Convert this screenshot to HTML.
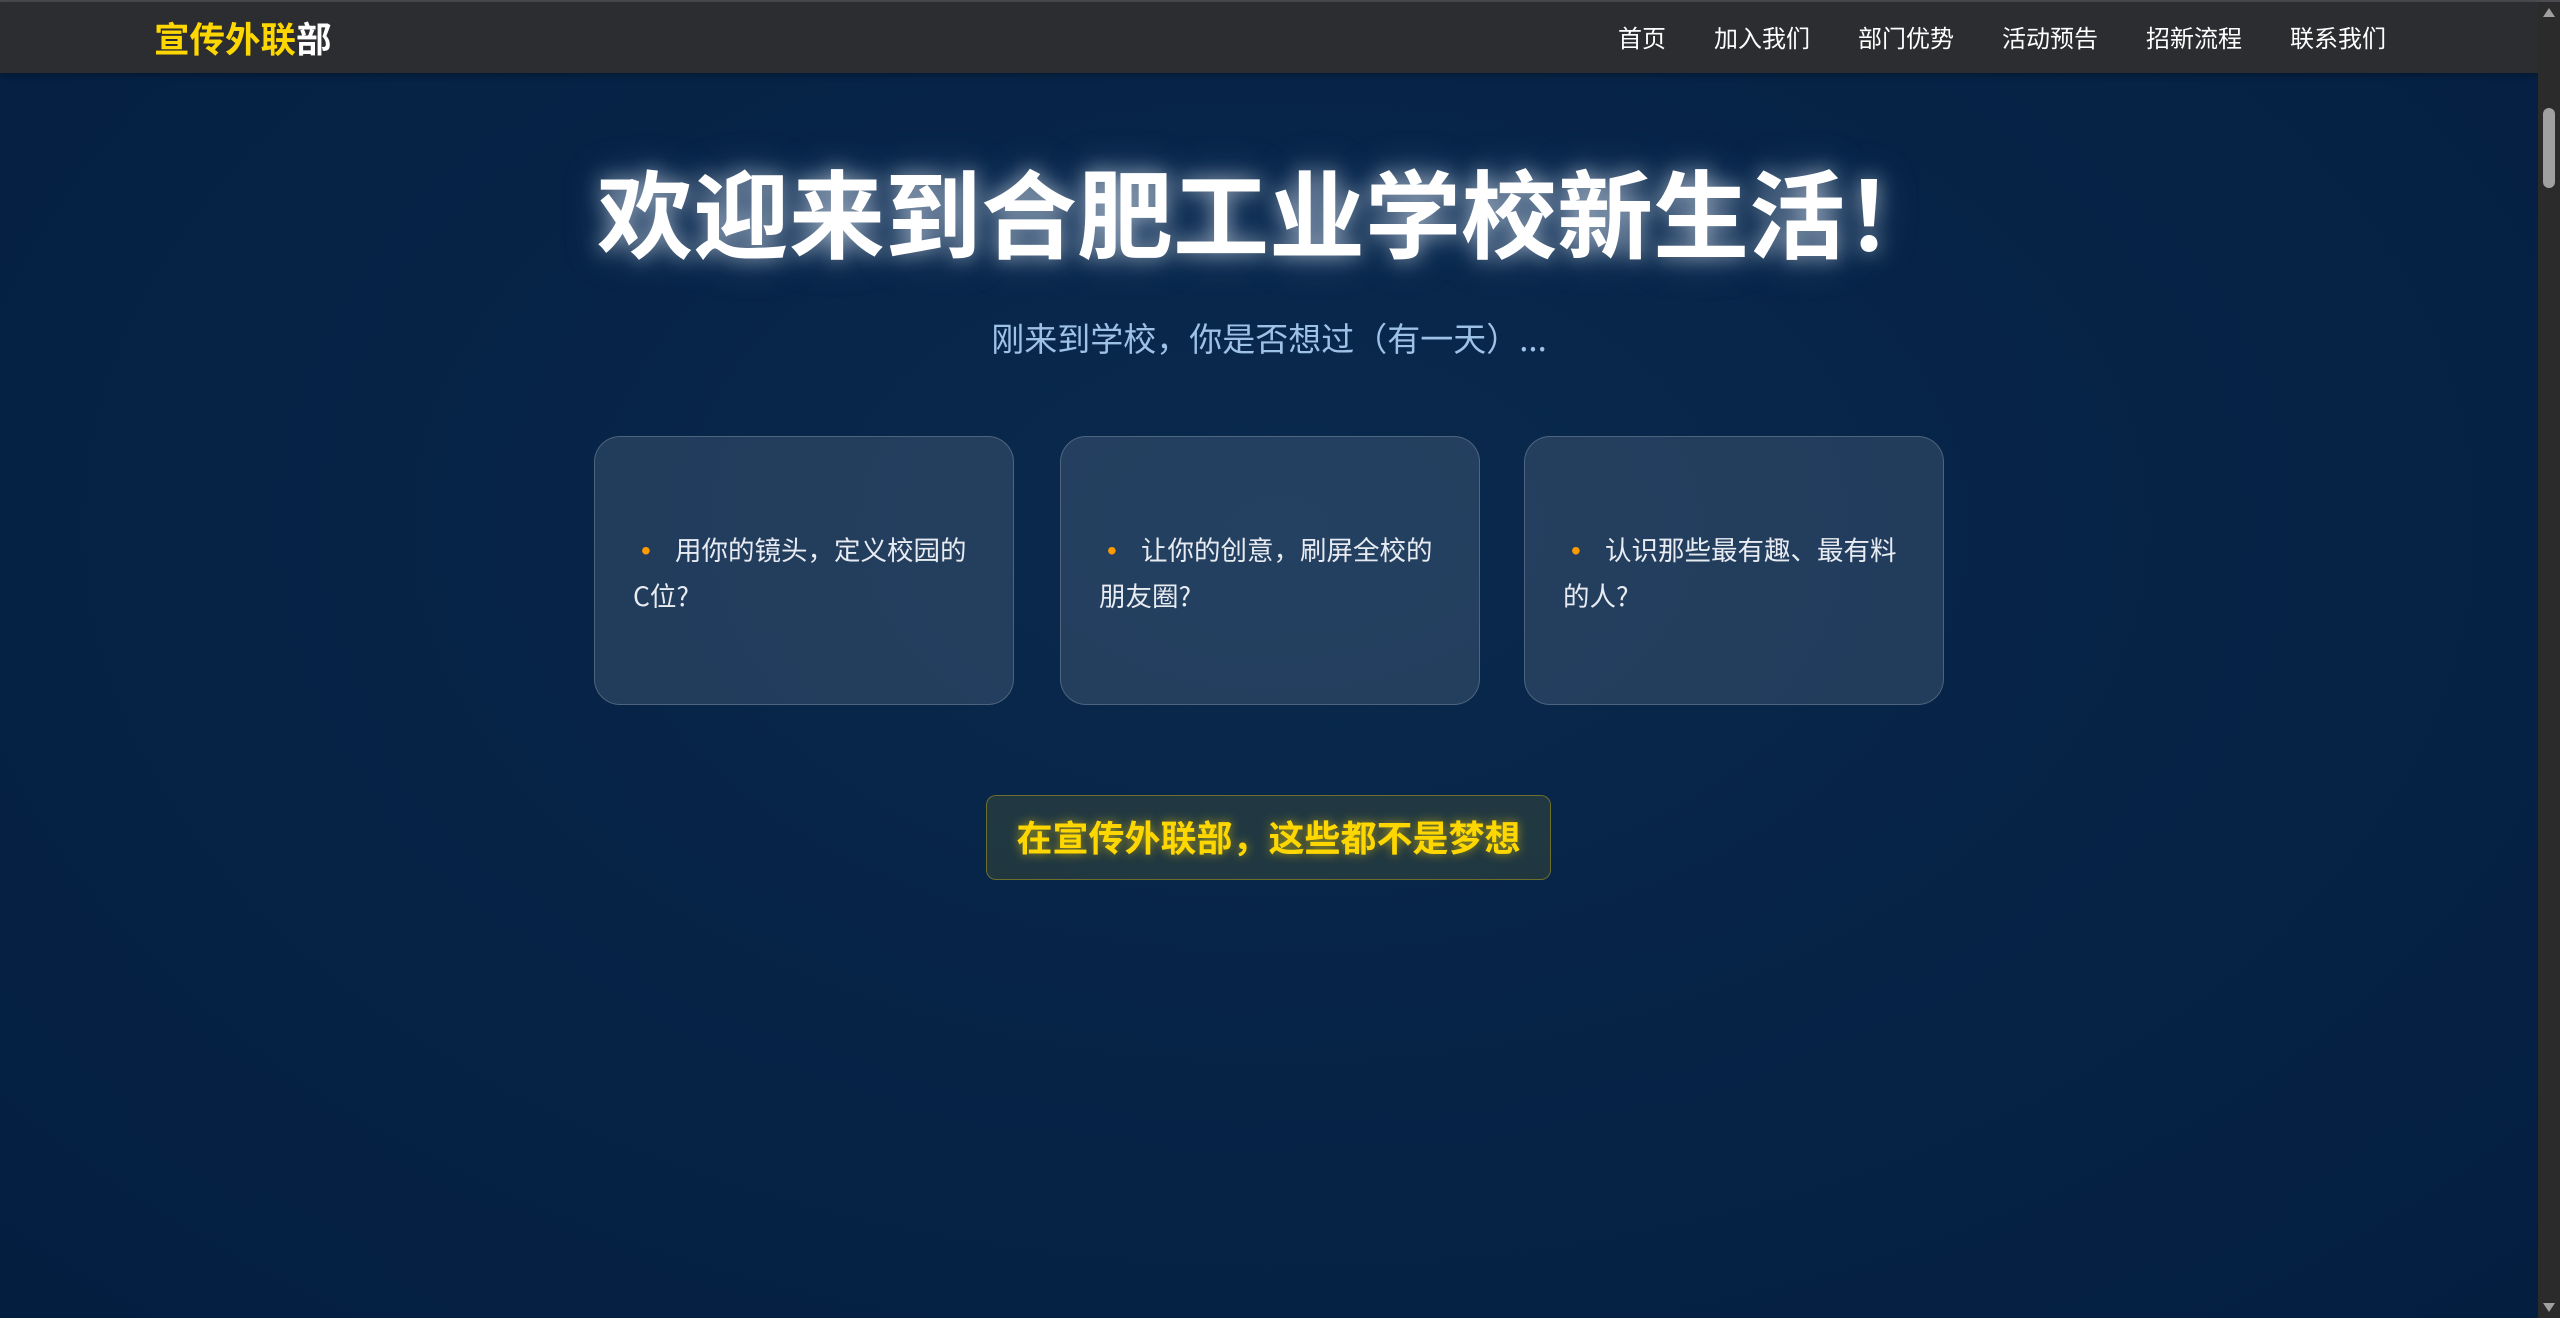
<!DOCTYPE html>
<html><head><meta charset="utf-8"><style>
*{margin:0;padding:0;box-sizing:border-box}
html,body{width:2560px;height:1318px;overflow:hidden}
body{font-family:"Noto Sans CJK SC","Liberation Sans",sans-serif;background:radial-gradient(ellipse at 50% 40%,#0a2a4e 0%,#062346 50%,#041e40 100%);position:relative}
.top{position:absolute;left:0;top:0;width:2560px;height:2px;background:#4a4c50}
nav{position:absolute;left:0;top:2px;width:2538px;height:71px;background:#2b2d30;box-shadow:0 2px 6px rgba(0,0,0,.3)}
.logo{position:absolute;left:154px;top:14px;font-size:35.5px;font-weight:bold;color:#ffd700;line-height:44px}
.logo span{color:#fff}
.links{position:absolute;right:152px;top:18px;display:flex;gap:48px;font-size:24px;color:#fff;line-height:34px}
h1{position:absolute;left:0;width:2538px;top:140px;text-align:center;font-size:96px;font-weight:bold;color:#fff;line-height:140px;text-shadow:0 0 20px rgba(255,255,255,.55),0 0 40px rgba(160,200,255,.35)}
.sub{position:absolute;left:0;width:2538px;top:313px;text-align:center;font-size:33px;color:#9ec2e6;line-height:48px}
.card{position:absolute;top:436px;width:420px;height:269px;border-radius:26px;background:rgba(255,255,255,.11);border:1.5px solid rgba(255,255,255,.2);padding:90px 36px 0 38px;font-size:26.5px;line-height:44px;color:#e8ecf2}
.card b{color:#ff9a00;font-weight:normal;display:inline-block;width:42px;text-align:left;padding-left:8px;font-family:"Liberation Sans",sans-serif;font-size:28px}
.btn{position:absolute;left:986px;top:795px;width:565px;height:85px;border-radius:10px;background:rgba(255,215,0,.1);border:1.5px solid rgba(255,215,0,.35);text-align:center;line-height:80px;font-size:36px;font-weight:bold;color:#ffd700;text-shadow:0 0 10px rgba(255,215,0,.6)}
.sb{position:absolute;right:0;top:2px;width:22px;height:1316px;background:#2b2b2b}
.thumb{position:absolute;left:5px;top:106px;width:12px;height:80px;border-radius:6px;background:#a0a0a0}
.arr{position:absolute;left:5px;top:6px;width:0;height:0;border-left:6px solid transparent;border-right:6px solid transparent;border-bottom:9px solid #a0a0a0}
.arr2{position:absolute;left:5px;bottom:6px;width:0;height:0;border-left:6px solid transparent;border-right:6px solid transparent;border-top:9px solid #a0a0a0}
</style></head><body>
<div class="top"></div>
<nav><div class="logo">宣传外联<span>部</span></div>
<div class="links"><span>首页</span><span>加入我们</span><span>部门优势</span><span>活动预告</span><span>招新流程</span><span>联系我们</span></div></nav>
<h1>欢迎来到合肥工业学校新生活！</h1>
<div class="sub">刚来到学校，你是否想过（有一天）...</div>
<div class="card" style="left:594px"><b>•</b>用你的镜头，定义校园的C位?</div>
<div class="card" style="left:1060px"><b>•</b>让你的创意，刷屏全校的朋友圈?</div>
<div class="card" style="left:1524px"><b>•</b>认识那些最有趣、最有料的人?</div>
<div class="btn">在宣传外联部，这些都不是梦想</div>
<div class="sb"><div class="arr"></div><div class="thumb"></div><div class="arr2"></div></div>
</body></html>
